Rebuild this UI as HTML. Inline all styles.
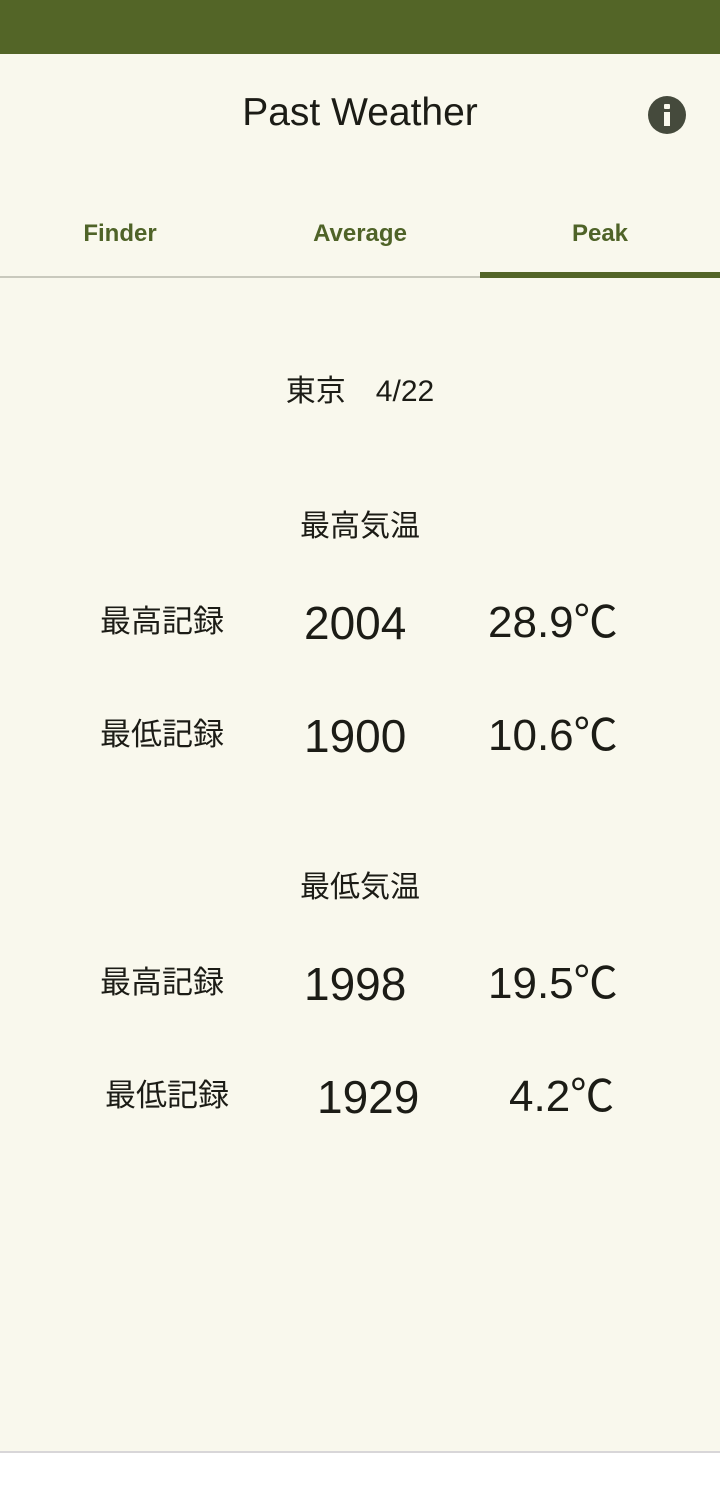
<!DOCTYPE html>
<html><head><meta charset="utf-8"><style>
body{margin:0;width:720px;height:1496px;background:#fff;position:relative;overflow:hidden;font-family:"Liberation Sans","Noto Sans CJK JP",sans-serif;color:#1c1c16}
.bg{position:absolute;left:0;top:54px;width:720px;height:1397px;background:#f9f8ed}
.top{position:absolute;left:0;top:0;width:720px;height:54px;background:#536527}
.t{position:absolute;white-space:nowrap;line-height:1}
.c{transform:translateX(-50%)}
.tab{position:absolute;top:222px;font-size:24px;font-weight:bold;color:#4f6328;transform:translateX(-50%);line-height:1}
</style></head><body>
<div class="top"></div>
<div class="bg"></div>
<div class="t c" style="left:360px;top:93px;font-size:39px;">Past Weather</div>
<div style="position:absolute;left:648px;top:96px;width:38px;height:38px;border-radius:50%;background:#454a3c"></div>
<div style="position:absolute;left:664px;top:104px;width:6px;height:5px;background:#f9f8ed;border-radius:1px"></div>
<div style="position:absolute;left:664px;top:112px;width:6px;height:14px;background:#f9f8ed"></div>
<div class="tab" style="left:120px">Finder</div>
<div class="tab" style="left:360px">Average</div>
<div class="tab" style="left:600px">Peak</div>
<div style="position:absolute;left:0;top:276px;width:720px;height:2px;background:#c9c9bd"></div>
<div style="position:absolute;left:480px;top:272px;width:240px;height:6px;background:#536527"></div>
<div class="t c" style="left:360px;top:377px;font-size:30px">東京　4/22</div>
<div class="t c" style="left:360px;top:512px;font-size:30px">最高気温</div>
<div class="t" style="left:100px;top:606px;font-size:31px">最高記録</div>
<div class="t" style="left:304px;top:600px;font-size:46px">2004</div>
<div class="t" style="left:488px;top:601px;font-size:44px">28.9℃</div>
<div class="t" style="left:100px;top:719px;font-size:31px">最低記録</div>
<div class="t" style="left:304px;top:713px;font-size:46px">1900</div>
<div class="t" style="left:488px;top:714px;font-size:44px">10.6℃</div>
<div class="t c" style="left:360px;top:873px;font-size:30px">最低気温</div>
<div class="t" style="left:100px;top:967px;font-size:31px">最高記録</div>
<div class="t" style="left:304px;top:961px;font-size:46px">1998</div>
<div class="t" style="left:488px;top:962px;font-size:44px">19.5℃</div>
<div class="t" style="left:105px;top:1080px;font-size:31px">最低記録</div>
<div class="t" style="left:317px;top:1074px;font-size:46px">1929</div>
<div class="t" style="left:509px;top:1075px;font-size:44px">4.2℃</div>
<div style="position:absolute;left:0;top:1451px;width:720px;height:2px;background:#d8d6d8"></div>
</body></html>
